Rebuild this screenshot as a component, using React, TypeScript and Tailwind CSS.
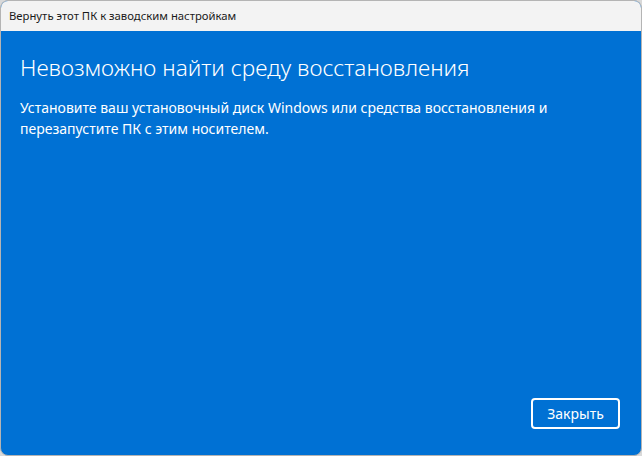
export default function App() {
  return (
    <div className="h-[456px] w-[642px] bg-[#d9d9d9]">
      <div
        className="flex h-full w-full flex-col overflow-hidden rounded-lg border border-[#b4b4b4] bg-[#0071d4]"
        style={{ fontFamily: '"Noto Sans", "Open Sans", sans-serif' }}
      >
        {/* Title bar */}
        <div className="flex h-[30px] shrink-0 items-center bg-[#f3f3f3] pl-[8px] text-[11.3px] text-[#1a1a1a]">
          Вернуть этот ПК к заводским настройкам
        </div>

        {/* Content */}
        <div className="flex flex-1 flex-col px-[19px] pb-[26px] pt-[19px] text-white">
          <h1 className="text-[22.6px] font-light leading-[36px]">
            Невозможно найти среду восстановления
          </h1>
          <p className="mt-[11px] text-[14px] leading-[21px]">
            Установите ваш установочный диск Windows или средства восстановления и
            <br />
            перезапустите ПК с этим носителем.
          </p>

          <div className="mt-auto flex justify-end pr-[2px]">
            <button className="h-[31px] w-[89px] rounded-[4px] border-2 border-white bg-[#0071d4] text-[14px] text-white">
              Закрыть
            </button>
          </div>
        </div>
      </div>
    </div>
  );
}
